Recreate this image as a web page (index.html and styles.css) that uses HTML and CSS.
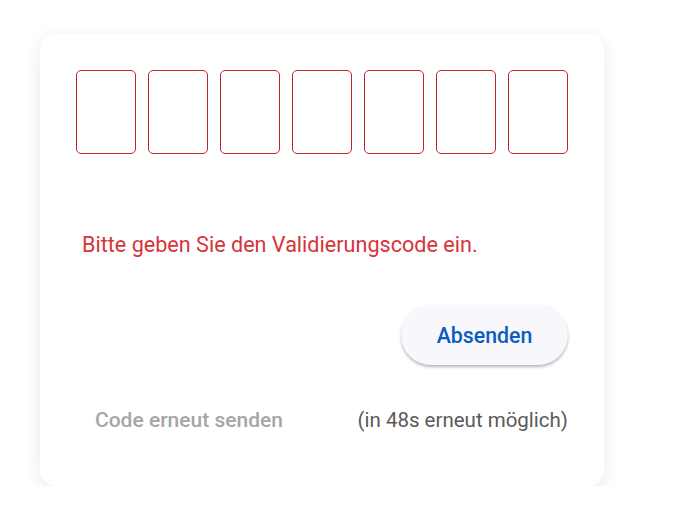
FILE: index.html
```html
<!DOCTYPE html>
<html lang="de">
<head>
<meta charset="utf-8">
<link rel="stylesheet" href="styles.css">
</head>
<body>
<div class="card">
  <div class="code-row">
    <input class="digit" type="text" maxlength="1">
    <input class="digit" type="text" maxlength="1">
    <input class="digit" type="text" maxlength="1">
    <input class="digit" type="text" maxlength="1">
    <input class="digit" type="text" maxlength="1">
    <input class="digit" type="text" maxlength="1">
    <input class="digit" type="text" maxlength="1">
  </div>
  <p class="error">Bitte geben Sie den Validierungscode ein.</p>
  <div class="actions">
    <button class="submit" type="button">Absenden</button>
  </div>
  <div class="resend-row">
    <span class="resend">Code erneut senden</span>
    <span class="timer">(in 48s erneut möglich)</span>
  </div>
</div>
</body>
</html>
```
FILE: styles.css
```css
* { box-sizing: border-box; }
html, body { margin: 0; padding: 0; background: #ffffff; }
body {
  font-family: Roboto, "Liberation Sans", sans-serif;
  padding: 34px 0 0 40px;
}
.card {
  width: 564px;
  height: 452px;
  background: #fff;
  border-radius: 16px;
  box-shadow: 0 4px 18px rgba(0,0,0,0.09);
  padding: 36px 36px 0 36px;
  display: flex;
  flex-direction: column;
}
.code-row {
  display: flex;
  gap: 12px;
}
.digit {
  width: 60px;
  height: 84px;
  border: 1px solid #c0282d;
  border-radius: 5px;
  background: #fff;
  padding: 0;
  outline: none;
}
.error {
  margin: 77px 0 0 6px;
  font-size: 21.6px;
  line-height: 28px;
  color: #d6343a;
}
.actions {
  display: flex;
  justify-content: flex-end;
  margin-top: 46px;
}
.submit {
  width: 167px;
  height: 60px;
  border: none;
  border-radius: 30px;
  background: #f7f7fc;
  box-shadow: 0 2px 3px rgba(0,0,0,0.28);
  color: #0b5cc0;
  font-family: Roboto, "Liberation Sans", sans-serif;
  font-size: 21.3px;
  font-weight: 500;
  padding: 0;
}
.resend-row {
  display: flex;
  justify-content: space-between;
  align-items: baseline;
  margin-top: 41px;
  padding-left: 19px;
}
.resend {
  font-size: 21px;
  line-height: 28px;
  font-weight: 500;
  color: #a6a6a6;
}
.timer {
  font-size: 20.5px;
  line-height: 28px;
  color: #5a5a5a;
}
```
